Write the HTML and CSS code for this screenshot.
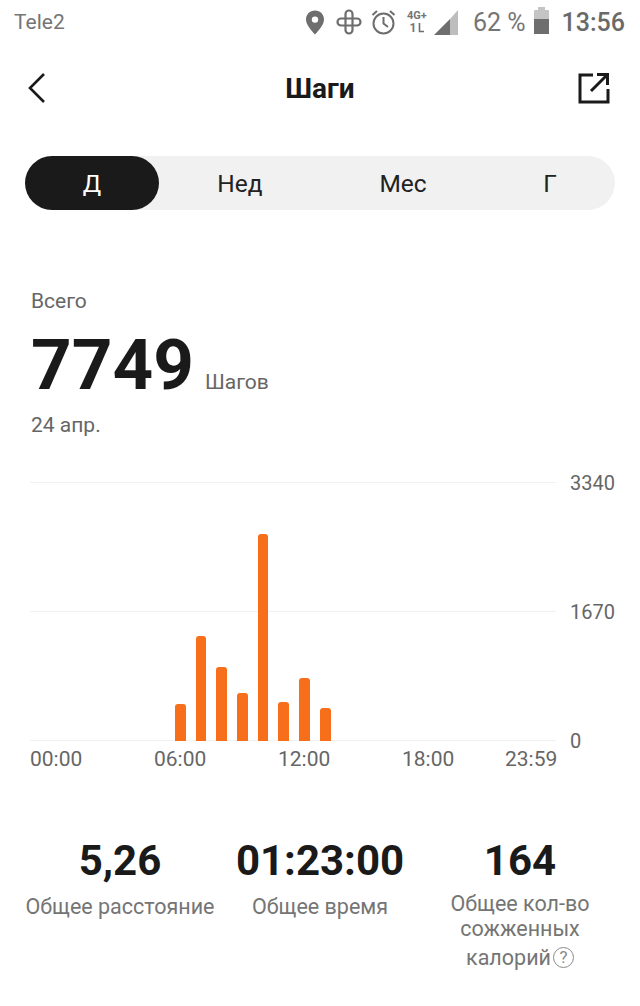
FILE: index.html
```html
<!DOCTYPE html>
<html lang="ru">
<head>
  <meta charset="UTF-8">
  <meta name="viewport" content="width=device-width, initial-scale=1.0">
  <title>Шаги</title>
  <link rel="stylesheet" href="styles.css">
</head>
<body>
  <div class="status-bar">
    <span class="carrier">Tele2</span>
    <div class="status-icons">
      <svg class="icon-pin" width="20" height="25" viewBox="0 0 20 25"><path fill-rule="evenodd" d="M10 0.5C4.7 0.5 1 4.4 1 9.4C1 15 7 21 10 24.5C13 21 19 15 19 9.4C19 4.4 15.3 0.5 10 0.5ZM10 6.4A3.2 3.2 0 1 1 10 12.8A3.2 3.2 0 1 1 10 6.4Z"/></svg>
      <svg class="icon-clover" width="26" height="26" viewBox="0 0 26 26"><path fill="none" stroke-width="2.200" d="M9.5 13V5a3.5 3.5 0 0 1 7 0V21a3.500 3.500 0 0 1-7 0V9.500M13 9.500H21a3.500 3.500 0 0 1 0 7H5a3.500 3.500 0 0 1 0-7H13"/></svg>
      <svg class="icon-alarm" width="25" height="26" viewBox="0 0 25 26"><g fill="none" stroke-width="2"><circle cx="12.500" cy="14.500" r="10"/><path d="M12.500 8V14.500L17 18M1.500 6L6 2M23.500 6L19 2"/></g></svg>
      <div class="net-type">
        <span>4G+</span>
        <span class="net-arrows">1<svg width="7" height="10" viewBox="0 0 7 10"><path fill="none" stroke-width="1.600" d="M2.500 0V8.500H7"/></svg></span>
      </div>
      <svg class="icon-signal" width="24" height="25" viewBox="0 0 24 25"><path d="M0 25L16 9V25Z"/><path class="signal-empty" d="M16 9L24 0V25H16Z"/></svg>
      <span class="battery-text">62 %</span>
      <div class="battery"><div class="battery-fill"></div></div>
      <span class="clock">13:56</span>
    </div>
  </div>

  <div class="title-bar">
    <svg class="back" width="20" height="32" viewBox="0 0 20 32"><path fill="none" stroke="#1a1a1a" stroke-width="2.600" d="M17 2L3 16L17 30"/></svg>
    <h1>Шаги</h1>
    <svg width="32" height="32" viewBox="0 0 32 32"><g fill="none" stroke="#1a1a1a" stroke-width="3"><path d="M15 3H2V30H30V17"/><path d="M13 19L29 3M19 2.500H29.500V13"/></g></svg>
  </div>

  <div class="tabs">
    <div class="tab active">Д</div>
    <div class="tab">Нед</div>
    <div class="tab">Мес</div>
    <div class="tab">Г</div>
  </div>

  <div class="summary">
    <div class="summary-label">Всего</div>
    <div class="summary-main"><span class="steps">7749</span><span class="steps-unit">Шагов</span></div>
    <div class="summary-date">24 апр.</div>
  </div>

  <div class="chart">
    <div class="plot">
      <div class="grid-row"><span>3340</span></div>
      <div class="grid-row"><span>1670</span></div>
      <div class="grid-row"><span>0</span></div>
      <div class="bars">
        <div class="bar" style="height: 37px"></div>
        <div class="bar" style="height: 105px"></div>
        <div class="bar" style="height: 74px"></div>
        <div class="bar" style="height: 48px"></div>
        <div class="bar" style="height: 207px"></div>
        <div class="bar" style="height: 39px"></div>
        <div class="bar" style="height: 63px"></div>
        <div class="bar" style="height: 33px"></div>
      </div>
    </div>
    <div class="hours">
      <span>00:00</span>
      <span>06:00</span>
      <span>12:00</span>
      <span>18:00</span>
      <span>23:59</span>
    </div>
  </div>

  <div class="stats">
    <div class="stat">
      <div class="stat-value">5,26</div>
      <div class="stat-label">Общее расстояние</div>
    </div>
    <div class="stat">
      <div class="stat-value">01:23:00</div>
      <div class="stat-label">Общее время</div>
    </div>
    <div class="stat">
      <div class="stat-value">164</div>
      <div class="stat-label tall">
        <span class="label-line">Общее кол-во</span>
        <span class="label-line">сожженных</span>
        <span class="label-line last">калорий<span class="help">?</span></span>
      </div>
    </div>
  </div>
</body>
</html>
```

FILE: styles.css
```css
body {
  margin: 0;
  height: 1006px;
  overflow: hidden;
  background: #fff;
  font-family: Roboto, "Noto Sans", sans-serif;
  color: #1a1a1a;
}

/* status bar */
.status-bar {
  display: flex;
  justify-content: space-between;
  align-items: center;
  height: 44px;
  padding: 0 15px 0 14px;
  color: #757575;
}
.carrier {
  font-size: 21px;
}
.status-icons {
  display: flex;
  align-items: center;
}
.status-icons svg {
  fill: #6e6e6e;
  stroke: #6e6e6e;
  stroke-width: 0;
}
.icon-clover {
  margin-left: 11px;
}
.icon-alarm {
  margin-left: 9px;
}
.net-type {
  display: flex;
  flex-direction: column;
  align-items: center;
  width: 22px;
  margin-left: 10px;
  font-size: 11px;
  font-weight: 700;
  line-height: 12px;
}
.net-arrows {
  display: flex;
  align-items: center;
  gap: 1px;
  font-size: 12px;
  line-height: 12px;
}
.icon-signal {
  margin-left: 6px;
}
.icon-signal .signal-empty {
  fill: #bdbdbd;
}
.battery-text {
  margin-left: 15px;
  font-size: 25px;
}
.battery {
  position: relative;
  width: 15px;
  height: 24px;
  margin-left: 8px;
  border-radius: 1px;
  background: #c4c4c4;
}
.battery::before {
  content: "";
  position: absolute;
  top: -3px;
  left: 4px;
  width: 7px;
  height: 3px;
  background: #c4c4c4;
}
.battery-fill {
  position: absolute;
  left: 0;
  right: 0;
  bottom: 0;
  height: 15px;
  background: #6e6e6e;
}
.clock {
  margin-left: 13px;
  font-size: 25px;
  font-weight: 500;
  color: #6a6a6a;
}

/* title */
.title-bar {
  display: flex;
  align-items: center;
  height: 88px;
  padding: 0 30px 0 27px;
}
.back {
  margin-right: 15px;
}
.title-bar h1 {
  flex: 1;
  margin: 0;
  font-size: 28px;
  font-weight: 700;
  text-align: center;
}

/* tabs */
.tabs {
  display: grid;
  grid-template-columns: 134px 162px 164px 130px;
  height: 54px;
  margin: 24px 25px 0;
  border-radius: 27px;
  background: #f1f1f1;
}
.tab {
  display: flex;
  align-items: center;
  justify-content: center;
  padding-top: 1px;
  border-radius: 27px;
  font-size: 24.500px;
  color: #222;
}
.tab.active {
  background: #1a1a1a;
  color: #fff;
}

/* summary */
.summary {
  margin-top: 79px;
  padding: 0 31px;
}
.summary-label,
.summary-date {
  font-size: 21px;
  line-height: 24px;
  color: #666;
}
.summary-main {
  display: flex;
  align-items: baseline;
  margin-top: 11px;
  height: 82px;
}
.steps {
  font-size: 71px;
  font-weight: 700;
  line-height: 82px;
}
.steps-unit {
  margin-left: 11px;
  font-size: 21px;
  color: #666;
}
.summary-date {
  margin-top: 7px;
}

/* chart */
.chart {
  margin-top: 45px;
  padding-left: 30px;
}
.plot {
  position: relative;
  display: flex;
  flex-direction: column;
  justify-content: space-between;
  height: 259px;
}
.grid-row {
  position: relative;
  width: 526px;
  height: 1px;
  background: #f1f1f1;
}
.grid-row span {
  position: absolute;
  left: 540px;
  top: -10px;
  font-size: 20px;
  line-height: 22px;
  color: #666;
}
.bars {
  position: absolute;
  left: 145px;
  bottom: 0;
  display: flex;
  align-items: flex-end;
  gap: 10px;
}
.bar {
  width: 10.700px;
  border-radius: 3px 3px 0 0;
  background: #f76f1a;
}
.hours {
  display: grid;
  grid-template-columns: 124px 124px 124px 103px auto;
  margin-top: 6px;
  font-size: 21px;
  line-height: 24px;
  color: #666;
}

/* stats */
.stats {
  display: grid;
  grid-template-columns: 200px 200px 200px;
  margin: 65px 20px 0;
  text-align: center;
}
.stat-value {
  font-size: 42px;
  font-weight: 700;
  line-height: 50px;
}
.stat-label {
  margin-top: 8px;
  font-size: 21.500px;
  line-height: 25px;
  color: #757575;
}
.stat-label.tall {
  margin-top: 5px;
}
.label-line {
  display: block;
}
.label-line.last {
  margin-top: 4px;
}
.help {
  display: inline-flex;
  align-items: center;
  justify-content: center;
  box-sizing: border-box;
  width: 21px;
  height: 21px;
  margin-left: 2px;
  border: 1.500px solid #8a8a8a;
  border-radius: 50%;
  font-size: 17px;
  line-height: 1;
  color: #8a8a8a;
  vertical-align: 2px;
}
```
